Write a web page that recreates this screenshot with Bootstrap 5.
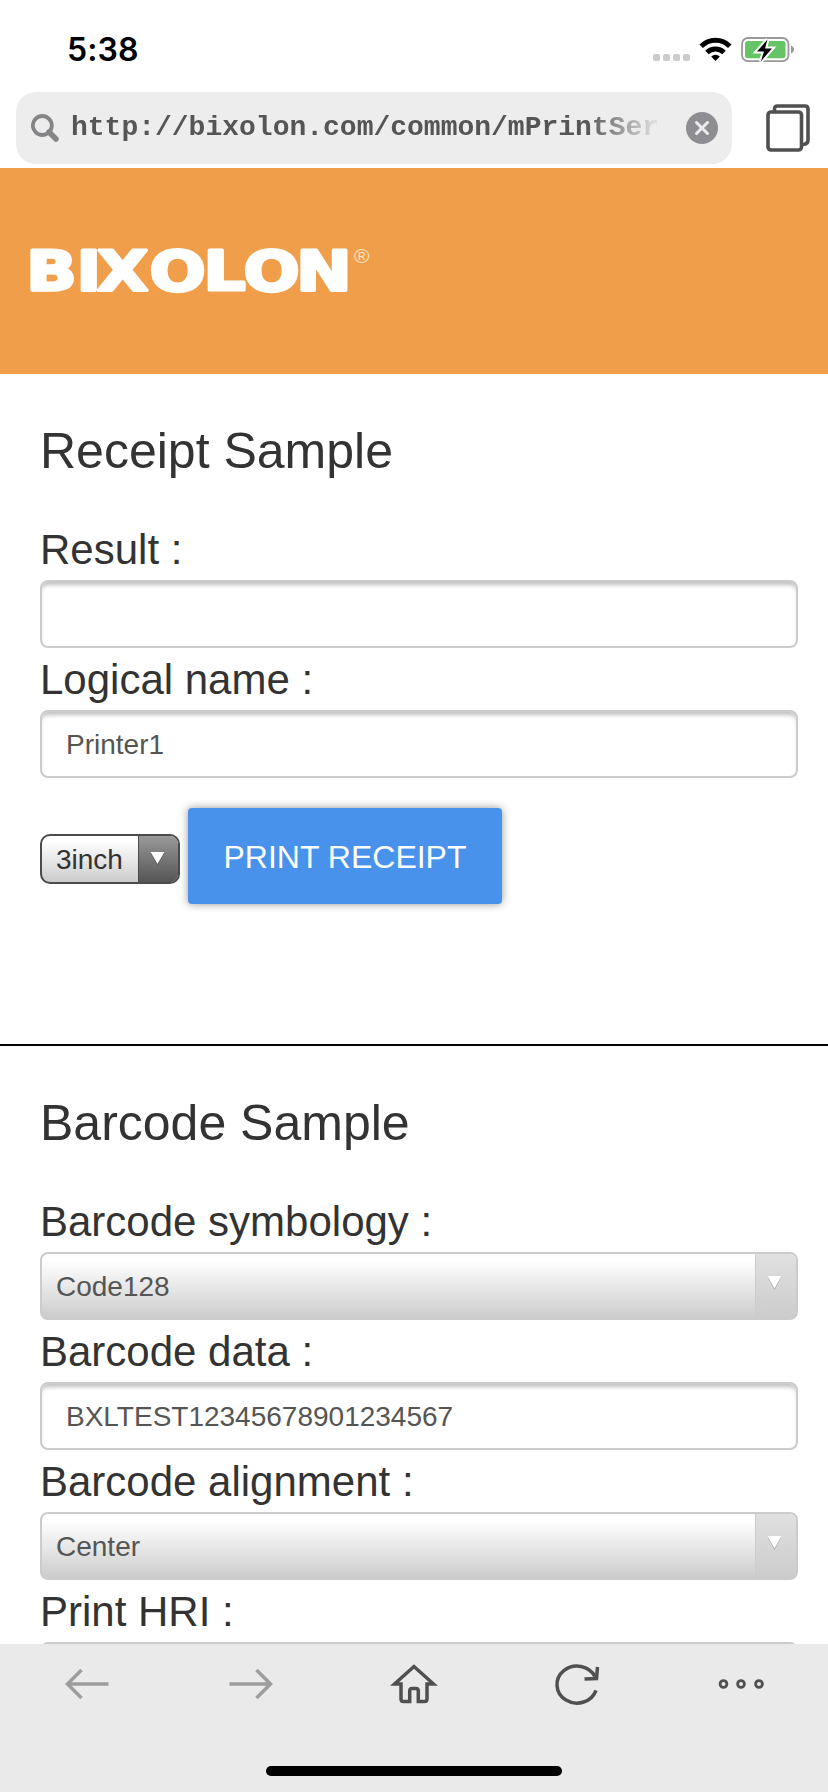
<!DOCTYPE html>
<html lang="en">
<head>
<meta charset="utf-8">
<meta name="viewport" content="width=device-width, initial-scale=1">
<title>BIXOLON mPrint</title>
<link href="https://cdn.jsdelivr.net/npm/bootstrap@5.3.0/dist/css/bootstrap.min.css" rel="stylesheet">
<style>
  html, body { height: 100%; }
  body { font-family: "Liberation Sans", Arial, sans-serif; color: #333; background: #fff; }
  svg { display: block; flex: none; }
  .status-bar { height: 92px; padding: 0 32px 0 67px; }
  .status-icons { margin-top: 32px; }
  .clock { font: 600 32px/38px Inter, sans-serif; color: #000; margin-top: 31px; letter-spacing: .1px; }
  .address-row { height: 76px; padding: 0 16px; }
  .address-pill { width: 716px; height: 72px; border-radius: 20px; background: #ededed; padding: 0 14px 0 15px; }
  .url-text { font: bold 28px/40px "Liberation Mono", monospace; color: #555; white-space: nowrap; width: 606px; flex: none; margin: -1px 0 0 12px;
    -webkit-mask-image: linear-gradient(90deg, #000 515px, transparent 592px); mask-image: linear-gradient(90deg, #000 515px, transparent 592px); }
  .tabs-icon { margin: 12px 0 0 34px; }
  .brand-band { height: 206px; background: #f09e49; }
  .sample { padding: 48px 30px 0 40px; }
  .sample-first { height: 672px; border-bottom: 2px solid #000; }
  .sample h1 { font-size: 50px; line-height: 58px; font-weight: 400; margin: 0 0 38px; }
  .field-label { display: block; font-size: 42px; line-height: 64px; height: 62px; }
  .field-box { height: 68px; border: 2px solid #ccc; border-radius: 8px; font-size: 28px; line-height: 32px; color: #555; background: #fff; }
  input.field-box { padding: 2px 24px 0 24px; box-shadow: inset 0 5px 4px -2px #c0c0c0; }
  .select-box { background: linear-gradient(#fff 10%, #ccc); overflow: hidden; }
  .select-box select, .mini-select select { appearance: none; border: 0; background: transparent; color: inherit; font: inherit; padding: 2px 0 0 14px; outline: 0; }
  .select-arrow { width: 41px; border-left: 1px solid #ccc; background: linear-gradient(#e0e0e0, #ccc); padding: 21px 0 0 11px; }
  .print-row { margin-top: 30px; }
  .mini-select { width: 140px; height: 50px; border: 2px solid #4b4b4b; border-radius: 10px; background: linear-gradient(#fff 10%, #ccc); overflow: hidden; margin: 26px 8px 0 0; color: #333; font-size: 28px; line-height: 32px; }
  .mini-select select { padding: 2px 0 0 14px; }
  .mini-select .select-arrow { width: 40px; border-color: #4b4b4b; background: linear-gradient(#999, #555); padding: 15px 0 0 11px; }
  .print-btn { width: 314px; height: 96px; background: #4892ec; color: #fff; border: 0; border-radius: 4px; font-size: 32px; line-height: 36px; padding: 2px 0 0; box-shadow: 0 0 8px rgba(0,0,0,.42); }
  .bottom-bar { height: 148px; background: #eaeaea; padding: 16px 5.5px 0; flex: none; }
  .home-pill { width: 296px; height: 10px; border-radius: 5px; background: #000; margin: 58px auto 0; }
</style>
</head>
<body class="d-flex flex-column overflow-hidden">
  <header>
    <div class="status-bar d-flex justify-content-between">
      <div class="clock">5:38</div>
      <svg class="status-icons" width="144" height="36" viewBox="652 32 144 36">
        <g fill="#ccc"><rect x="653" y="54" width="7" height="7" rx="2"/><rect x="663" y="54" width="7" height="7" rx="2"/><rect x="673" y="54" width="7" height="7" rx="2"/><rect x="683" y="54" width="7" height="7" rx="2"/></g>
        <g fill="none" stroke="#000" stroke-width="5"><path d="M701.200 46.200a20.300 20.300 0 0 1 28.600 0"/><path d="M707 52.500a12.200 12.200 0 0 1 17 0"/></g>
        <path d="M715.500 61l-4.300-4.400a6.200 6.200 0 0 1 8.600 0z" fill="#000"/>
        <rect x="742" y="38" width="46.500" height="23.200" rx="6" fill="none" stroke="#999" stroke-width="1.800"/>
        <rect x="745" y="41" width="40.500" height="17.200" rx="3" fill="#65c466"/>
        <path d="M791 45.500c4 1.500 4 6.500 0 8z" fill="#999"/>
        <path d="M767.500 39.500l-10.500 12h7l-3.200 10 11.200-13h-7z" fill="#000" stroke="#fff" stroke-width="4" paint-order="stroke"/>
      </svg>
    </div>
    <div class="address-row d-flex">
      <div class="address-pill d-flex align-items-center">
        <svg width="28" height="28" viewBox="0 0 28 28" fill="none" stroke="#858588"><circle cx="11.300" cy="11.500" r="9.500" stroke-width="3.800"/><path d="M18 18l7 7" stroke-width="5.500" stroke-linecap="round"/></svg>
        <div class="url-text">http://bixolon.com/common/mPrintSer</div>
        <svg class="ms-auto" width="32" height="32" viewBox="0 0 32 32"><circle cx="16" cy="16" r="16" fill="#8e8d92"/><path d="M10.500 10.500l11 11m0-11l-11 11" stroke="#ededed" stroke-width="3" stroke-linecap="round"/></svg>
      </div>
      <svg class="tabs-icon" width="44" height="48" viewBox="0 0 44 48" fill="none" stroke="#505050" stroke-width="3.600"><rect x="2" y="8" width="33.500" height="38" rx="3"/><path d="M8.500 7V5q0-3 3-3H39q3 0 3 3v31q0 4-5 4.500"/></svg>
    </div>
  </header>

  <main class="flex-grow-1 overflow-hidden">
    <div class="brand-band">
      <svg width="400" height="150" viewBox="0 0 400 150" role="img" aria-label="BIXOLON">
        <text transform="scale(1.18 1)" y="122.500" x="22.300 64.800 82.500 126.600 172.400 206.400 251" font-family="DejaVu Sans, sans-serif" font-weight="bold" font-size="56" fill="#fff" stroke="#fff" stroke-width="3.200" stroke-linejoin="round">BIXOLON</text>
        <text y="95" x="354" font-family="Liberation Sans, sans-serif" font-size="21" fill="#fbe0c4">®</text>
      </svg>
    </div>

    <section class="sample sample-first">
      <h1>Receipt Sample</h1>
      <label class="field-label" for="result">Result :</label>
      <input class="field-box d-block w-100" id="result" type="text">
      <label class="field-label" for="printer">Logical name :</label>
      <input class="field-box d-block w-100" id="printer" type="text" value="Printer1">
      <div class="print-row d-flex align-items-start">
        <div class="mini-select d-flex">
          <select class="flex-grow-1" aria-label="Paper width"><option>3inch</option></select>
          <span class="select-arrow"><svg width="15" height="14"><path d="M.500 2h14L7.500 14z" fill="#444"/><path d="M.500 1h14L7.500 13z" fill="#fff"/></svg></span>
        </div>
        <button class="print-btn btn" type="button">PRINT RECEIPT</button>
      </div>
    </section>

    <section class="sample">
      <h1>Barcode Sample</h1>
      <label class="field-label" for="symbology">Barcode symbology :</label>
      <div class="field-box select-box d-flex">
        <select class="flex-grow-1" id="symbology"><option>Code128</option></select>
        <span class="select-arrow"><svg width="15" height="15"><path d="M.500 2h14L7.500 15z" fill="#aaa"/><path d="M.500 1h14L7.500 13.500z" fill="#fff"/></svg></span>
      </div>
      <label class="field-label" for="data">Barcode data :</label>
      <input class="field-box d-block w-100" id="data" type="text" value="BXLTEST12345678901234567">
      <label class="field-label" for="alignment">Barcode alignment :</label>
      <div class="field-box select-box d-flex">
        <select class="flex-grow-1" id="alignment"><option>Center</option></select>
        <span class="select-arrow"><svg width="15" height="15"><path d="M.500 2h14L7.500 15z" fill="#aaa"/><path d="M.500 1h14L7.500 13.500z" fill="#fff"/></svg></span>
      </div>
      <div class="field-label">Print HRI :</div>
      <div class="field-box select-box"></div>
    </section>
  </main>

  <nav class="bottom-bar">
    <div class="row g-0">
      <div class="col d-flex justify-content-center"><svg width="48" height="48" viewBox="-24 -24 48 48" fill="none" stroke="#9d9d9d" stroke-width="3.500"><path d="M21.500 0H-19M-5.500-14L-19.500 0l14 14"/></svg></div>
      <div class="col d-flex justify-content-center"><svg width="48" height="48" viewBox="-24 -24 48 48" fill="none" stroke="#9d9d9d" stroke-width="3.500"><path d="M-21.500 0H19M5.500-14L19.500 0l-14 14"/></svg></div>
      <div class="col d-flex justify-content-center"><svg width="48" height="48" viewBox="-24 -24 48 48" fill="none" stroke="#505050" stroke-width="3.500"><path d="M0-17.500L-19.500 0h6.500V15q0 2.500 2.500 2.500h6.200V7q0-2.500 2.500-2.500h3.600q2.500 0 2.500 2.500V17.500h6.200Q13 17.500 13 15V0h6.500z"/></svg></div>
      <div class="col d-flex justify-content-center"><svg width="48" height="48" viewBox="-24 -24 48 48" fill="none" stroke="#505050" stroke-width="3.500"><path d="M19 6.300A20 18.500 0 1 1 18-7.500"/><path d="M20.500-17L19.500-5.500 7.500-5"/></svg></div>
      <div class="col d-flex justify-content-center"><svg width="48" height="48" viewBox="-24 -24 48 48" fill="none" stroke="#505050" stroke-width="2.800"><circle cx="-17.500" r="3.400"/><circle cx="0" r="3.400"/><circle cx="18" r="3.400"/></svg></div>
    </div>
    <div class="home-pill"></div>
  </nav>
<script src="https://cdn.jsdelivr.net/npm/bootstrap@5.3.0/dist/js/bootstrap.bundle.min.js"></script>
</body>
</html>
